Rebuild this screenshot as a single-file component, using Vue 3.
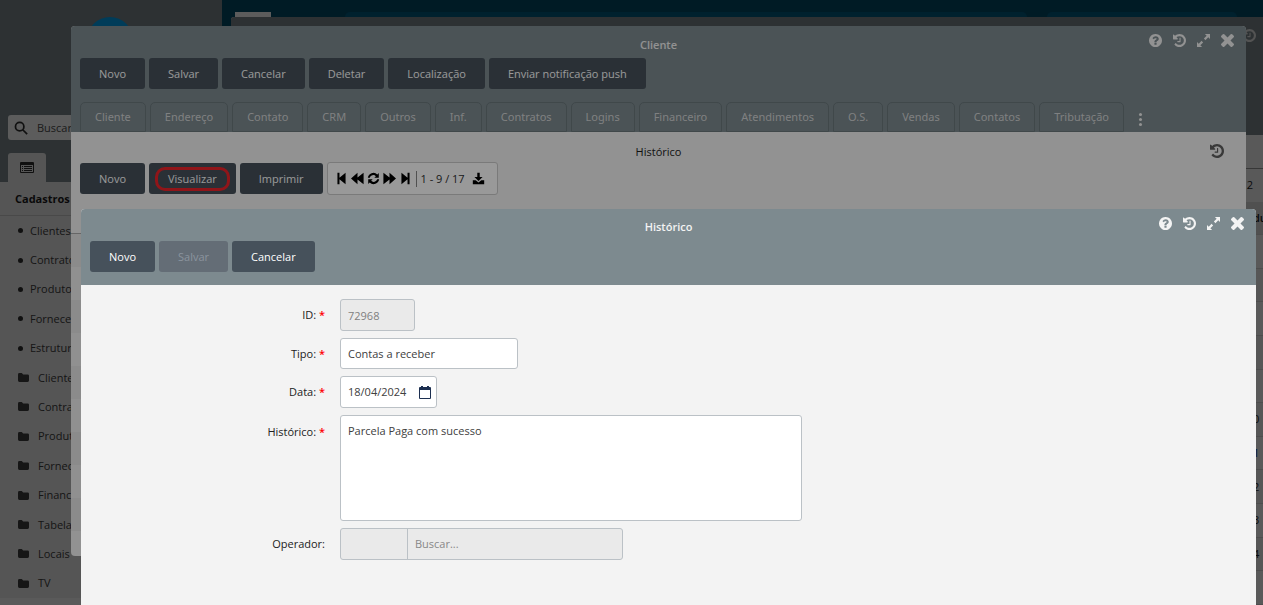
<script setup>
import { ref } from 'vue'

const shortcuts = ['Clientes', 'Contratos', 'Produtos', 'Fornecedores', 'Estrutura']
const folders = ['Clientes', 'Contratos', 'Produtos', 'Fornecedores', 'Financeiro', 'Tabelas', 'Locais', 'TV']
const actions = ['Novo', 'Salvar', 'Cancelar', 'Deletar', 'Localização', 'Enviar notificação push']
const tabs = ['Cliente', 'Endereço', 'Contato', 'CRM', 'Outros', 'Inf.', 'Contratos', 'Logins', 'Financeiro', 'Atendimentos', 'O.S.', 'Vendas', 'Contatos', 'Tributação']
const ids = ['', '', '', '', '', '0', '1', '2', '3', '4', '']
const tools = ['help', 'history', 'expand', 'close']
const toolLabels = { help: 'Ajuda', history: 'Alterações', expand: 'Expandir', close: 'Fechar' }
const pagerStart = ['first', 'prev', 'refresh', 'next', 'last']
const pagerLabels = { first: 'Primeira', prev: 'Anterior', refresh: 'Atualizar', next: 'Próxima', last: 'Última' }

const boxes = {
  help: '128 128 1536 1536',
  history: '0 128 1536 1536',
  expand: '1 1 14 14',
  close: '302 366 1188 1188'
}
const icons = {
  help: 'M1024 1376v-192q0-14-9-23t-23-9h-192q-14 0-23 9t-9 23v192q0 14 9 23t23 9h192q14 0 23-9t9-23zm256-672q0-88-55.500-163t-138.500-116-170-41q-243 0-371 213-15 24 8 42l132 100q7 6 19 6 16 0 25-12 53-68 86-92 34-24 86-24 48 0 85.500 26t37.500 59q0 38-20 61t-68 45q-63 28-115.500 86.500t-52.500 125.500v36q0 14 9 23t23 9h192q14 0 23-9t9-23q0-19 21.500-49.500t54.500-49.500q32-18 49-28.500t46-35 44.500-48 28-60.500 12.500-81zm384 192q0 209-103 385.500t-279.500 279.500-385.500 103-385.500-103-279.500-279.500-103-385.500 103-385.500 279.500-279.500 385.500-103 385.500 103 279.500 279.500 103 385.500z',
  history: 'M1536 896q0 156-61 298t-164 245-245 164-298 61q-172 0-327-72.500t-264-204.500q-7-10-6.500-22.500t8.500-20.500l137-138q10-9 25-9 16 2 23 12 73 95 179 147t225 52q104 0 198.500-40.500t163.500-109.500 109.500-163.500 40.500-198.500-40.500-198.500-109.500-163.500-163.500-109.500-198.500-40.500q-98 0-188 35.500t-160 101.500l137 138q31 30 14 69-17 40-59 40h-448q-26 0-45-19t-19-45v-448q0-42 40-59 39-17 69 14l130 129q107-101 244.500-156.500t284.500-55.500q156 0 298 61t245 164 164 245 61 298zm-640-288v448q0 14-9 23t-23 9h-320q-14 0-23-9t-9-23v-64q0-14 9-23t23-9h224v-352q0-14 9-23t23-9h64q14 0 23 9t9 23z',
  expand: 'M9.500 1H15v5.500l-1.900-1.900-3 3-1.700-1.700 3-3ZM1 9.500l1.900 1.900 3-3 1.700 1.700-3 3L6.500 15H1Z',
  close: 'M1490 1322q0 40-28 68l-136 136q-28 28-68 28t-68-28l-294-294-294 294q-28 28-68 28t-68-28l-136-136q-28-28-28-68t28-68l294-294-294-294q-28-28-28-68t28-68l136-136q28-28 68-28t68 28l294 294 294-294q28-28 68-28t68 28l136 136q28 28 28 68t-28 68l-294 294 294 294q28 28 28 68z',
  first: 'M3 1h2.500v6L13 1v14L5.500 9v6H3Z',
  last: 'M13 1h-2.500v6L3 1v14l7.500-6v6H13Z',
  prev: 'M8 1v5.800L15.500 1v14L8 9.200V15L0 8Z',
  next: 'M8 1v5.800L.5 1v14L8 9.200V15l8-7Z',
  refresh: 'M1 7A7 7 0 0 1 12.700 3L14.500 1.300V7H9l1.900-1.900A4.600 4.600 0 0 0 3.400 7ZM15 9A7 7 0 0 1 3.300 13L1.500 14.700V9H7l-1.900 1.900A4.600 4.600 0 0 0 12.600 9Z',
  download: 'M6.500 1h3v5H13L8 11 3 6h3.500ZM1 10h3.500L8 13l3.500-3H15v5H1Z',
  folder: 'M0 3.500Q0 1.500 2 1.500h3.500L7.500 3.500H14Q16 3.500 16 5.500v7Q16 14.500 14 14.500H2Q0 14.500 0 12.500Z'
}

const form = ref({ id: '72968', type: 'Contas a receber', date: '18/04/2024', note: 'Parcela Paga com sucesso' })
</script>

<template>
  <div class="app">
    <aside class="sidebar">
      <div class="brand"><span class="logo"></span></div>
      <label class="search">
        <svg viewBox="0 0 16 16" class="lens"><circle cx="6.500" cy="6.500" r="4.800" /><path d="M10 10l5 5" /></svg>
        <input type="text" placeholder="Buscar" aria-label="Buscar no menu" />
      </label>
      <button class="menu-tab" aria-label="Cadastros">
        <svg viewBox="0 0 14 12"><path fill-rule="evenodd" d="M1 0h12q1 0 1 1v9q0 1-1 1H1q-1 0-1-1V1q0-1 1-1Zm0 3v7h12V3ZM2 4h1v1H2Zm2 0h8v1H4ZM2 6h1v1H2Zm2 0h8v1H4ZM2 8h1v1H2Zm2 0h8v1H4Z" /></svg>
      </button>
      <nav class="menu">
        <h2>Cadastros</h2>
        <ul>
          <li v-for="s in shortcuts" :key="s"><a href="#"><i class="dot"></i>{{ s }}</a></li>
          <li v-for="f in folders" :key="'f' + f">
            <a href="#" class="in"><svg viewBox="0 0 16 16" class="folder"><path :d="icons.folder" /></svg>{{ f }}</a>
          </li>
        </ul>
        <div class="menu-foot"></div>
      </nav>
    </aside>

    <main class="main">
      <header class="topbar"><span class="mark"></span><span class="strip wide"></span><span class="strip"></span></header>
      <section class="base-window">
        <div class="base-head"><svg :viewBox="boxes.history" class="base-icon"><path :d="icons.history" /></svg></div>
        <div class="base-bar"></div>
        <div class="base-pager">2</div>
        <div class="base-grid">
          <table>
            <thead><tr><th></th><th>du</th></tr></thead>
            <tbody>
              <tr v-for="(n, i) in ids" :key="i"><td></td><td :class="{ linked: n === '1' }">{{ n }}</td></tr>
            </tbody>
          </table>
        </div>
      </section>
    </main>

    <div class="backdrop"></div>

    <section class="dialog client" role="dialog" aria-label="Cliente">
      <header class="dialog-head">
        <h1>Cliente</h1>
        <div class="tools">
          <button v-for="t in tools" :key="t" :aria-label="toolLabels[t]"><svg :viewBox="boxes[t]"><path :d="icons[t]" /></svg></button>
        </div>
        <div class="actions"><button v-for="a in actions" :key="a" class="btn">{{ a }}</button></div>
        <div class="tabs">
          <button v-for="t in tabs" :key="t" class="tab">{{ t }}</button>
          <button class="more" aria-label="Mais abas"><i></i><i></i><i></i></button>
        </div>
      </header>
      <div class="client-body">
        <div class="sub-title"><h2>Histórico</h2>
          <button class="sub-tool" aria-label="Alterações"><svg :viewBox="boxes.history"><path :d="icons.history" /></svg></button>
        </div>
        <div class="actions">
          <button class="btn">Novo</button>
          <button class="btn marked">Visualizar</button>
          <button class="btn">Imprimir</button>
          <div class="pager">
            <button v-for="p in pagerStart" :key="p" :aria-label="pagerLabels[p]"><svg viewBox="0 0 16 16"><path :d="icons[p]" /></svg></button>
            <span class="count">1 - 9 / 17</span>
            <button aria-label="Baixar"><svg viewBox="0 0 16 16"><path :d="icons.download" /></svg></button>
          </div>
        </div>
        <div class="grid-head"></div>
        <div class="grid-rows"><div v-for="n in 9" :key="n"></div></div>
      </div>
    </section>

    <div class="backdrop"></div>

    <section class="dialog record" role="dialog" aria-label="Histórico">
      <header class="dialog-head">
        <h1>Histórico</h1>
        <div class="tools">
          <button v-for="t in tools" :key="t" :aria-label="toolLabels[t]"><svg :viewBox="boxes[t]"><path :d="icons[t]" /></svg></button>
        </div>
        <div class="actions">
          <button class="btn">Novo</button>
          <button class="btn" disabled>Salvar</button>
          <button class="btn">Cancelar</button>
        </div>
      </header>
      <form class="form" @submit.prevent>
        <div class="row">
          <label for="rid">ID: <b>*</b></label>
          <input id="rid" v-model="form.id" class="field w-id" type="text" disabled />
        </div>
        <div class="row">
          <label for="rtype">Tipo: <b>*</b></label>
          <select id="rtype" v-model="form.type" class="field w-type"><option>Contas a receber</option></select>
        </div>
        <div class="row">
          <label for="rdate">Data: <b>*</b></label>
          <div class="field w-date">
            <input id="rdate" v-model="form.date" type="text" />
            <button type="button" aria-label="Abrir calendário">
              <svg viewBox="0 0 12 13"><path fill-rule="evenodd" d="M2 0h2v1h4V0h2v1h1q1 0 1 1v10q0 1-1 1H1q-1 0-1-1V2q0-1 1-1h1ZM1 4v8h10V4Z" /></svg>
            </button>
          </div>
        </div>
        <div class="row top">
          <label for="rnote">Histórico: <b>*</b></label>
          <textarea id="rnote" v-model="form.note" class="field w-note"></textarea>
        </div>
        <div class="row">
          <label for="rop">Operador:</label>
          <div class="field w-op">
            <input id="rop" type="text" disabled />
            <input type="text" placeholder="Buscar..." aria-label="Buscar operador" disabled />
          </div>
        </div>
      </form>
    </section>
  </div>
</template>

<style>
body { margin: 0; }
</style>

<style scoped>
* { box-sizing: border-box; }
.app {
  position: relative;
  display: flex;
  height: 100vh;
  overflow: hidden;
  background: #ededed;
  color: #1c1c1c;
  font: 11px/16px "Open Sans", "Noto Sans", sans-serif;
}
button, input, select, textarea { font: inherit; color: inherit; }
button { padding: 0; border: 0; background: none; }
h1, h2 { margin: 0; font-size: 11px; line-height: 16px; }
svg { display: block; fill: currentColor; }

.sidebar { display: flex; flex-direction: column; flex: 0 0 222px; background: #7d8a8f; color: #303030; }
.brand { flex: 0 0 115px; padding: 17px 3px 0 0; }
.logo { display: block; width: 46px; height: 46px; margin: 0 auto; border-radius: 50%; background: #00a8f8; }
.search { display: flex; align-items: center; gap: 9px; height: 25px; margin: 0 8px; padding: 0 6px; border-radius: 3px; background: #fff; }
.lens { width: 14px; height: 14px; fill: none; stroke: #303030; stroke-width: 2; }
.search input { min-width: 0; border: 0; padding: 0; background: none; outline: 0; }
.search input::placeholder { color: #505050; opacity: 1; }
.menu-tab { display: grid; place-items: center; width: 38px; height: 29px; margin: 13px 0 0 8px; border-radius: 3px 3px 0 0; background: #ededed; color: #303030; }
.menu-tab svg { width: 14px; height: 12px; }
.menu { display: flex; flex: 1; flex-direction: column; min-height: 0; background: #ededed; }
.menu h2 { padding: 9px 15px 8px; border-bottom: 1px solid #ccc; color: #1c1c1c; }
.menu ul { display: grid; flex: 1; grid-auto-rows: 1fr; margin: 0; padding: 0; list-style: none; }
.menu li { display: flex; align-items: center; }
.menu a { display: flex; align-items: center; gap: 7px; padding-left: 18px; color: #404040; text-decoration: none; }
.menu a.in { gap: 9px; }
.dot { width: 5px; height: 5px; border-radius: 50%; background: #303030; }
.folder { width: 11px; height: 11px; }
.menu-foot { height: 7px; background: #fafafa; }

.main { display: flex; flex: 1; flex-direction: column; min-width: 0; background: #004c6a; }
.topbar { display: flex; flex: 0 0 17px; align-items: flex-end; padding-left: 13px; }
.mark { width: 36px; height: 5px; background: #fff; }
.strip { width: 190px; height: 5px; margin-left: 20px; border-radius: 20px 20px 0 0; background: #005c80; }
.strip.wide { flex: 0 1 682px; margin-left: 74px; }
.base-window { display: flex; flex: 1; flex-direction: column; min-height: 0; margin-left: 9px; border-radius: 3px 0 0 0; background: #f8f8f8; overflow: hidden; }
.base-head { display: flex; justify-content: flex-end; flex: 0 0 118px; padding: 12px 7px; background: #7d8a8f; color: #e8e8e8; }
.base-icon { width: 13px; height: 13px; }
.base-bar { flex: 0 0 34px; border-bottom: 1px solid #999; }
.base-pager { flex: 0 0 33px; padding: 8px 10px; text-align: right; }
.base-grid { flex: 1; min-height: 0; }
.base-grid table { width: 100%; height: 100%; table-layout: fixed; border-spacing: 0; }
.base-grid th, .base-grid td { height: 33px; padding: 0; border-bottom: 1px solid #d8d8d8; overflow: hidden; text-align: left; }
.base-grid th { background: #e0e0e0; font-weight: 600; }
.base-grid tr:nth-child(even) td { background: #efefef; }
.base-grid :is(th, td):last-child { width: 10px; }
.base-grid .linked { color: #0044aa; }

.backdrop { position: absolute; inset: 0; background: rgba(0, 0, 0, 0.4); }

.dialog { position: absolute; overflow: hidden; border-radius: 4px; background: #f3f3f3; }
.client { inset: 26px 17px 49px 71px; }
.record { inset: 209px 7px 0 81px; border-radius: 4px 4px 0 0; }
.dialog-head { position: relative; padding: 10px 9px 13px; background: #7d8a8f; }
.dialog-head h1 { text-align: center; color: #f3f3f3; font-weight: 600; margin-bottom: 6px; }
.client .dialog-head { padding: 11px 9px 0; }
.client h1 { margin-bottom: 5px; }
.tools { position: absolute; top: 8px; right: 12px; display: flex; gap: 11px; color: #f3f3f3; }
.tools svg { width: 13px; height: 13px; }
.actions { display: flex; gap: 4px; }
.btn { height: 31px; padding: 0 19px; border-radius: 3px; background: #46515b; color: #fff; font-weight: 500; }
.btn:disabled { background: #646d76; color: #8b949e; }
.tabs { display: flex; gap: 4px; margin-top: 13px; }
.tab { height: 30px; padding: 0 14px; border: 1px solid #6b787c; border-radius: 5px 5px 0 0; color: #d4d6d7; font-family: "Noto Sans", sans-serif; }
.more { display: flex; flex-direction: column; align-items: center; gap: 2px; width: 26px; padding-top: 11px; }
.more i { width: 3px; height: 3px; border-radius: 50%; background: #f3f3f3; }
.client-body { padding: 12px 9px 0; }
.sub-title { position: relative; margin-bottom: 2px; text-align: center; }
.sub-title h2 { font-weight: 400; }
.sub-tool { position: absolute; right: 13px; top: 0; color: #5f5f5f; }
.sub-tool svg { width: 14px; height: 14px; }
.client-body .actions { align-items: center; }
.marked { position: relative; }
.marked::after { content: ""; position: absolute; inset: 4px 6px 3px; border: 3px solid #f0242b; border-radius: 10px; }
.pager { display: flex; align-items: center; height: 33px; padding: 0 10px 0 6px; border: 1px solid #ccc; border-radius: 3px; background: #fff; color: #000; }
.pager button { width: 16px; }
.pager svg { width: 13px; height: 13px; margin: 0 auto; }
.count { margin: 0 6px 0 2px; padding-left: 4px; border-left: 1px solid #888; color: #303030; }
.grid-head { height: 39px; margin: 0 -9px; border-bottom: 1px solid #aaa; }
.grid-rows { margin: 0 -9px; }
.grid-rows div { height: 33px; background: #e8e8e8; }
.grid-rows div:nth-child(even) { background: #f0f0f0; }

.form { display: grid; gap: 7px; padding: 14px 0; }
.row { display: grid; grid-template-columns: 244px auto; gap: 15px; align-items: center; justify-content: start; }
.row.top { align-items: start; }
.row.top label { padding-top: 9px; }
.row label { text-align: right; color: #222; }
.row b { color: #f00; font-weight: 600; }
.field { height: 32px; margin: 0; padding: 0 7px; border: 1px solid #bbc1c6; border-radius: 3px; background: #fff; color: #404040; outline: 0; }
.field:disabled { background: #eaeaea; color: #808080; opacity: 1; }
.w-id { width: 75px; }
.w-type { width: 178px; height: 31px; appearance: none; }
.w-date { display: flex; align-items: center; justify-content: space-between; width: 97px; padding-right: 5px; }
.w-date input { width: 64px; padding: 0; border: 0; outline: 0; }
.w-date button { color: #1c2f50; }
.w-date svg { width: 12px; height: 13px; }
.w-note { width: 462px; height: 106px; padding-top: 7px; resize: none; }
.w-op { display: flex; width: 283px; padding: 0; overflow: hidden; background: #eaeaea; }
.w-op input { min-width: 0; padding: 0 7px; border: 0; background: none; }
.w-op input:first-child { flex: 0 0 67px; border-right: 1px solid #bbc1c6; }
.w-op input:last-child { flex: 1; }
.w-op input::placeholder { color: #888; opacity: 1; }
</style>
